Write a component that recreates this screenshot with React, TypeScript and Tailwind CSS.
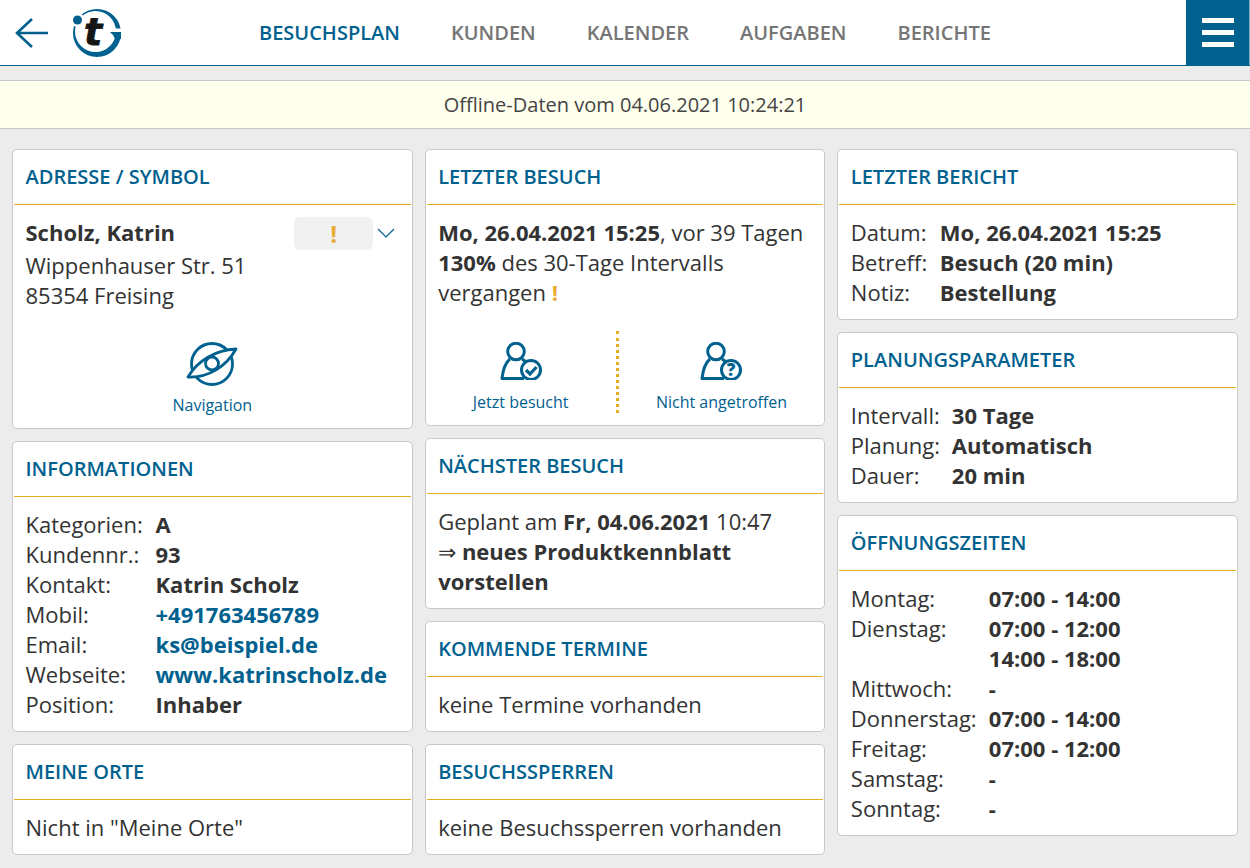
import { ReactNode } from "react";

const Card = ({ title, children }: { title: string; children: ReactNode }) => (
	<section className="rounded-[5px] border border-[#c8c8c8] bg-white">
		<h2 className="mx-px flex h-[55px] items-center border-b border-[#e8ab1e] px-[11.5px] text-[20px] font-semibold text-[#00618f] uppercase">
			{title}
		</h2>
		<div className="px-[12.5px] text-[22px] leading-[30px] text-[#333]">{children}</div>
	</section>
);

const Rows = ({ rows, labelWidth }: { rows: [string, ReactNode][]; labelWidth: string }) => (
	<div className={`grid ${labelWidth} py-3`}>
		{rows.map(([label, value], i) => (
			<div key={i} className="contents">
				<span>{label}</span>
				<span className="font-bold">{value}</span>
			</div>
		))}
	</div>
);

const Logo = () => (
	<svg className="mt-[3px]" width="50" height="50" viewBox="0 0 50 50">
		<path
			fillRule="evenodd"
			d="M48 24 A24 24 0 1 1 0 24 A24 24 0 1 1 48 24 Z M43 22.5 A20.5 20.5 0 1 0 2 22.5 A20.5 20.5 0 1 0 43 22.5 Z"
			fill="#00618f"
		/>
		<rect x="37" y="19.5" width="12" height="3.5" fill="#fff" />
		<path d="M37 23 H48 V30 H42 Q41 26 37 23 Z" fill="#00618f" />
		<circle cx="4.5" cy="11" r="7" fill="#fff" />
		<circle cx="4.5" cy="11" r="4.5" fill="#00618f" />
		<text
			x="11"
			y="36"
			fontSize="38"
			fontWeight="700"
			fontStyle="italic"
			fill="#151515"
			stroke="#151515"
			strokeWidth="0.8"
			fontFamily="'DejaVu Sans', sans-serif"
		>
			t
		</text>
	</svg>
);

const Person = ({ badge }: { badge: "check" | "question" }) => (
	<svg width="42" height="38" viewBox="0 0 42 38" fill="none" stroke="#00618f" strokeWidth="3">
		<circle cx="16" cy="9.5" r="8.3" />
		<path d="M10 17 C5 21 3 28 2 36.5 H24" strokeLinejoin="round" />
		<path d="M22 17 C23.5 18 25 19 26 20" />
		<circle cx="31" cy="28" r="9.5" fill="#fff" />
		{badge === "check" ? (
			<path d="M26 28 L30 32 L36.5 25" strokeWidth="3.2" />
		) : (
			<text x="31" y="34" textAnchor="middle" fill="#00618f" stroke="none" fontSize="17" fontWeight="800" fontFamily="'Open Sans', sans-serif">
				?
			</text>
		)}
	</svg>
);

const Compass = () => (
	<svg width="52" height="46" viewBox="0 0 52 46" fill="none" stroke="#00618f" strokeWidth="2.8">
		<circle cx="26" cy="23" r="20.5" />
		<path d="M2 36 C12 19 30 9 50 8 C40 26 22 37 2 36 Z" fill="#fff" strokeLinejoin="round" />
		<circle cx="26" cy="22.5" r="6.5" fill="#fff" />
	</svg>
);

const nav = ["Besuchsplan", "Kunden", "Kalender", "Aufgaben", "Berichte"];

export default function App() {
	return (
		<div className="h-[868px] overflow-hidden bg-[#ececec] font-['Open_Sans',sans-serif]">
			<header className="flex h-[66px] items-stretch border-b border-[#00618f] bg-white">
				<div className="flex w-[259px] items-center gap-6 pl-[15px]">
					<svg width="34" height="32" viewBox="0 0 34 32" fill="none" stroke="#00618f" strokeWidth="2.6">
						<path d="M33 16 H2 M17 2 L2 16 L17 30" />
					</svg>
					<Logo />
				</div>
				<nav className="flex flex-1 items-center gap-[51px] text-[20px] font-semibold uppercase text-[#757575]">
					{nav.map((item, i) => (
						<span key={item} className={i === 0 ? "text-[#00618f]" : ""}>
							{item}
						</span>
					))}
				</nav>
				<button className="flex w-[64px] flex-col items-center justify-center gap-[7px] border-r border-[#7fb0c7] bg-[#00618f]">
					<span className="h-[5px] w-8 bg-white" />
					<span className="h-[5px] w-8 bg-white" />
					<span className="h-[5px] w-8 bg-white" />
				</button>
			</header>

			<div className="mt-[14px] flex h-[49px] items-center justify-center border-y border-[#c8c8c8] bg-[#ffffee] text-[20px] text-[#444]">
				Offline-Daten vom 04.06.2021 10:24:21
			</div>

			<main className="grid grid-cols-3 gap-3 px-3 pt-[20px]">
				<div className="flex flex-col gap-3">
					<Card title="Adresse / Symbol">
						<div className="relative py-3">
							<p className="mb-[3px] font-bold">Scholz, Katrin</p>
							<p>Wippenhauser Str. 51</p>
							<p>85354 Freising</p>
							<div className="absolute top-[12px] right-[26px] flex h-[33px] w-[79px] items-center justify-center rounded-[6px] bg-[#f1f1f1] text-[24px] font-bold text-[#e8ab33]">
								!
							</div>
							<svg className="absolute top-[23px] right-[4px]" width="18" height="11" viewBox="0 0 18 11" fill="none" stroke="#00618f" strokeWidth="1.2">
								<path d="M1 1 L9 9 L17 1" />
							</svg>
							<div className="mt-[31px] flex flex-col items-center text-[16px] leading-[22px] text-[#00618f]">
								<Compass />
								<span className="mt-[7px]">Navigation</span>
							</div>
						</div>
					</Card>
					<Card title="Informationen">
						<Rows
							labelWidth="grid-cols-[130px_1fr]"
							rows={[
								["Kategorien:", "A"],
								["Kundennr.:", "93"],
								["Kontakt:", "Katrin Scholz"],
								["Mobil:", <span className="text-[#00618f]">+491763456789</span>],
								["Email:", <span className="text-[#00618f]">ks@beispiel.de</span>],
								["Webseite:", <span className="text-[#00618f]">www.katrinscholz.de</span>],
								["Position:", "Inhaber"],
							]}
						/>
					</Card>
					<Card title="Meine Orte">
						<p className="py-3">Nicht in "Meine Orte"</p>
					</Card>
				</div>

				<div className="flex flex-col gap-3">
					<Card title="Letzter Besuch">
						<div className="py-3">
							<p>
								<b>Mo, 26.04.2021 15:25</b>, vor 39 Tagen
								<br />
								<b>130%</b> des 30-Tage Intervalls
								<br />
								vergangen <b className="text-[#e8ab33]">!</b>
							</p>
							<div className="-mx-[12.5px] mt-6 grid h-[82px] grid-cols-[193px_1fr] text-[16px] leading-[22px] text-[#00618f]">
								<div className="flex flex-col items-center border-r-[3px] border-dotted border-[#e8ab1e] pt-[11px]">
									<Person badge="check" />
									<span className="mt-[11px]">Jetzt besucht</span>
								</div>
								<div className="flex flex-col items-center pt-[11px]">
									<Person badge="question" />
									<span className="mt-[11px]">Nicht angetroffen</span>
								</div>
							</div>
						</div>
					</Card>
					<Card title="Nächster Besuch">
						<p className="py-3">
							Geplant am <b>Fr, 04.06.2021</b> 10:47
							<br />
							⇒ <b>neues Produktkennblatt vorstellen</b>
						</p>
					</Card>
					<Card title="Kommende Termine">
						<p className="py-3">keine Termine vorhanden</p>
					</Card>
					<Card title="Besuchssperren">
						<p className="py-3">keine Besuchssperren vorhanden</p>
					</Card>
				</div>

				<div className="flex flex-col gap-3">
					<Card title="Letzter Bericht">
						<Rows
							labelWidth="grid-cols-[89px_1fr]"
							rows={[
								["Datum:", "Mo, 26.04.2021 15:25"],
								["Betreff:", "Besuch (20 min)"],
								["Notiz:", "Bestellung"],
							]}
						/>
					</Card>
					<Card title="Planungsparameter">
						<Rows
							labelWidth="grid-cols-[101px_1fr]"
							rows={[
								["Intervall:", "30 Tage"],
								["Planung:", "Automatisch"],
								["Dauer:", "20 min"],
							]}
						/>
					</Card>
					<Card title="Öffnungszeiten">
						<Rows
							labelWidth="grid-cols-[138px_1fr]"
							rows={[
								["Montag:", "07:00 - 14:00"],
								["Dienstag:", "07:00 - 12:00"],
								["", "14:00 - 18:00"],
								["Mittwoch:", "-"],
								["Donnerstag:", "07:00 - 14:00"],
								["Freitag:", "07:00 - 12:00"],
								["Samstag:", "-"],
								["Sonntag:", "-"],
							]}
						/>
					</Card>
				</div>
			</main>
		</div>
	);
}
